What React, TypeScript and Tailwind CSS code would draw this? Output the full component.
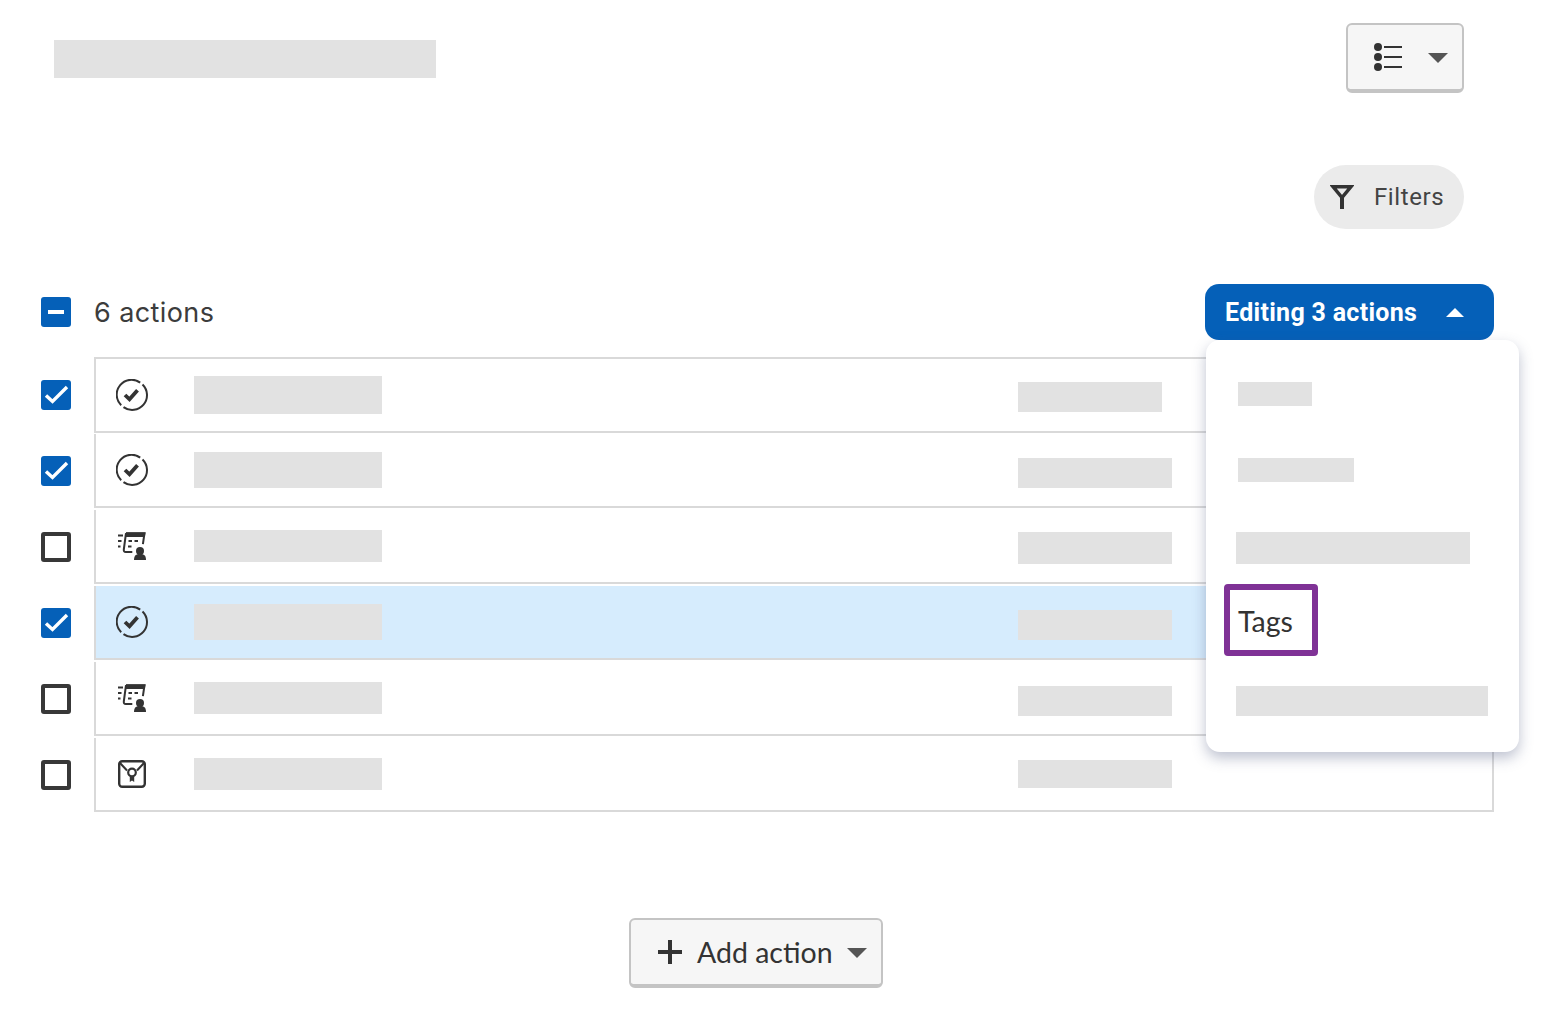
type RowKind = 'check' | 'form' | 'badge';

interface Row {
  kind: RowKind;
  checked: boolean;
  active?: boolean;
  box: string;
  icon: string;
  name: string;
  value: string;
}

// margin-top is measured from the inside of each row so the placeholder bars stay uneven like the original
const rows: Row[] = [
  { kind: 'check', checked: true, box: 'h-[76px]', icon: 'mt-[20px]', name: 'mt-[17px] h-[38px]', value: 'mt-[23px] h-[30px] w-[144px]' },
  { kind: 'check', checked: true, box: 'mt-px h-[74px]', icon: 'mt-[20px]', name: 'mt-[18px] h-[36px]', value: 'mt-[24px] h-[30px] w-[154px]' },
  { kind: 'form', checked: false, box: 'mt-[2px] h-[74px]', icon: 'mt-[22px]', name: 'mt-[20px] h-[32px]', value: 'mt-[22px] h-[32px] w-[154px]' },
  { kind: 'check', checked: true, active: true, box: 'mt-[2px] h-[74px]', icon: 'mt-[20px]', name: 'mt-[18px] h-[36px]', value: 'mt-[24px] h-[30px] w-[154px]' },
  { kind: 'form', checked: false, box: 'mt-[2px] h-[74px]', icon: 'mt-[22px]', name: 'mt-[20px] h-[32px]', value: 'mt-[24px] h-[30px] w-[154px]' },
  { kind: 'badge', checked: false, box: 'mt-[2px] h-[74px]', icon: 'mt-[22px]', name: 'mt-[20px] h-[32px]', value: 'mt-[22px] h-[28px] w-[154px]' },
];

function CaretDown() {
  return (
    <svg viewBox="0 0 20 10" width="20" height="10" className="mt-[2px] text-[#555]" fill="currentColor">
      <path d="M0 0h20L10 10z" />
    </svg>
  );
}

function CaretUp() {
  return (
    <svg viewBox="0 0 20 10" width="18" height="9" className="text-white" fill="currentColor">
      <path d="M0 10h20L10 0z" />
    </svg>
  );
}

function ListIcon() {
  return (
    <svg viewBox="0 0 28 28" width="28" height="28" className="text-[#333]" fill="currentColor">
      <circle cx="4" cy="4" r="4" />
      <circle cx="4" cy="14" r="4" />
      <circle cx="4" cy="24" r="4" />
      <path d="M10 3h18v2H10zM10 13h18v2H10zM10 23h18v2H10z" />
    </svg>
  );
}

function FilterIcon() {
  return (
    <svg viewBox="0 0 24 24" width="24" height="24" className="text-[#333]" fill="none" stroke="currentColor">
      <path d="M3 1.700h18L12 12.500z" strokeWidth="3.400" />
      <path d="M12 11v13" strokeWidth="4" />
    </svg>
  );
}

function CheckCircleIcon() {
  return (
    <svg viewBox="0 0 32 32" width="32" height="32" className="text-[#333]" fill="none" stroke="currentColor">
      <path d="M26.500 5.500A14.800 14.800 0 0 1 7.500 28.100" strokeWidth="2" />
      <path d="M5.200 26.200A14.800 14.800 0 0 1 24.200 3.600" strokeWidth="2" />
      <path d="M9 16l4.500 4.300 8-9" strokeWidth="3.800" />
    </svg>
  );
}

function FormIcon() {
  return (
    <svg viewBox="0 0 28 28" width="28" height="28" className="text-[#333]" fill="none" stroke="currentColor">
      <path d="M8 1.200h18.500l-1.600 11M8 1.200L5.800 17.500q-.3 2.500 2 2.500h6.500" strokeWidth="2" />
      <path d="M8 .5h19.500l-.7 4.500H7.400z" fill="currentColor" stroke="none" />
      <path d="M0 3.500h5M0 9h3.500M0 14.500h2.500M10.500 9h3.500M16.500 9h3.500M10 14.500h3.500" strokeWidth="2" />
      <circle cx="22" cy="19" r="4" fill="currentColor" stroke="none" />
      <path d="M16 28c0-4.500 2-6 6-6s6 1.500 6 6z" fill="currentColor" stroke="none" />
    </svg>
  );
}

function BadgeIcon() {
  return (
    <svg viewBox="0 0 28 28" width="28" height="28" className="text-[#333]" fill="none" stroke="currentColor">
      <rect x="1.200" y="1.200" width="25.600" height="25.600" rx="3" strokeWidth="2.400" />
      <path d="M2 3l7 7.500M26 3l-7 7.500" strokeWidth="2" />
      <circle cx="14" cy="12.500" r="3.800" strokeWidth="2.200" />
      <path d="M11.800 16v6l2.200-1.500 2.200 1.500v-6z" fill="currentColor" stroke="none" />
    </svg>
  );
}

function Checkbox({ checked }: { checked: boolean }) {
  if (!checked) {
    return <span className="block h-[30px] w-[30px] shrink-0 rounded-[3px] border-4 border-[#383838] bg-white" />;
  }
  return (
    <span className="flex h-[30px] w-[30px] shrink-0 items-center justify-center rounded-[3px] bg-[#0560b8]">
      <svg viewBox="0 0 30 30" width="30" height="30" fill="none" stroke="white" strokeWidth="3.400">
        <path d="M5 15.500l6.500 6L26 7" />
      </svg>
    </span>
  );
}

function RowIcon({ kind }: { kind: RowKind }) {
  if (kind === 'check') return <CheckCircleIcon />;
  if (kind === 'form') return <FormIcon />;
  return <BadgeIcon />;
}

export default function App() {
  return (
    <div className="h-[1020px] w-[1548px] overflow-hidden bg-white pl-[41px] pr-[54px] text-[#333]">
      {/* Title + view switch */}
      <div className="flex items-start justify-between pr-[30px] pt-[23px]">
        <div className="ml-[13px] mt-[17px] h-[38px] w-[382px] bg-[#e2e2e2]" />
        <button className="flex h-[70px] w-[118px] items-center justify-between rounded-[6px] border-2 border-b-4 border-[#c4c4c4] bg-[#f6f6f6] pl-[26px] pr-[14px]">
          <ListIcon />
          <CaretDown />
        </button>
      </div>

      {/* Filters */}
      <div className="mt-[72px] flex justify-end pr-[30px]">
        <button className="flex h-[64px] w-[150px] items-center gap-[20px] rounded-full bg-[#ebebeb] pl-[16px] font-['Roboto',sans-serif] text-[24px] tracking-[0.6px] text-[#444]">
          <FilterIcon />
          Filters
        </button>
      </div>

      {/* Bulk edit bar */}
      <div className="mt-[55px] flex h-[56px] items-center justify-between">
        <div className="flex items-center gap-[23px]">
          <span className="flex h-[30px] w-[30px] items-center justify-center rounded-[3px] bg-[#0560b8]">
            <span className="h-[4px] w-[16px] bg-white" />
          </span>
          <span className="pt-[2px] font-['Inter',sans-serif] text-[27px] tracking-[0.4px] text-[#3c3c3c]">6 actions</span>
        </div>
        <div className="relative">
          <button className="flex h-[56px] w-[289px] items-center justify-between rounded-[14px] bg-[#0560b8] pl-[20px] pr-[30px] font-['Roboto',sans-serif] text-[25px] font-bold tracking-[0.3px] text-white">
            <span className="pt-px">Editing 3 actions</span>
            <CaretUp />
          </button>
          <div className="absolute left-px top-full z-10 h-[412px] w-[313px] rounded-[14px] bg-white pl-[32px] pt-px shadow-[0_6px_14px_rgba(70,80,120,0.35)]">
            <div className="mt-[41px] h-[24px] w-[74px] bg-[#e2e2e2]" />
            <div className="mt-[52px] h-[24px] w-[116px] bg-[#e2e2e2]" />
            <div className="-ml-[2px] mt-[50px] h-[32px] w-[234px] bg-[#e2e2e2]" />
            <div className="-ml-[14px] mt-[20px] flex h-[72px] w-[94px] items-center rounded-[4px] border-[6px] border-[#7f3296] pl-[8px] pt-[2px] font-['Lato',sans-serif] text-[28.500px] text-[#333]">
              Tags
            </div>
            <div className="-ml-[2px] mt-[30px] h-[30px] w-[252px] bg-[#e2e2e2]" />
          </div>
        </div>
      </div>

      {/* Actions list */}
      <div className="mt-[17px] flex flex-col">
        {rows.map((row, i) => (
          <div key={i} className={`flex items-center gap-[23px] ${row.box}`}>
            <Checkbox checked={row.checked} />
            <div
              className={`flex h-full w-[1400px] items-start border-x-2 border-b-2 border-[#d9d9d9] ${i === 0 ? 'border-t-2' : ''} ${row.active ? 'bg-[#d6ecfd]' : 'bg-white'}`}
            >
              <div className={`ml-[20px] mr-[46px] flex w-[32px] shrink-0 justify-center ${row.icon}`}>
                <RowIcon kind={row.kind} />
              </div>
              <div className={`w-[188px] bg-[#e2e2e2] ${row.name}`} />
              <div className={`ml-[636px] bg-[#e2e2e2] ${row.value}`} />
            </div>
          </div>
        ))}
      </div>

      {/* Add action */}
      <div className="mt-[106px] flex pl-[588px]">
        <button className="flex h-[70px] w-[254px] items-center rounded-[6px] border-2 border-b-4 border-[#c4c4c4] bg-[#f6f6f6] pl-[27px] font-['Lato',sans-serif] text-[28.500px] text-[#333]">
          <svg viewBox="0 0 24 24" width="24" height="24" fill="currentColor">
            <path d="M10 0h4v10h10v4H14v10h-4V14H0v-4h10z" />
          </svg>
          <span className="ml-[15px] mr-[14px]">Add action</span>
          <CaretDown />
        </button>
      </div>
    </div>
  );
}
